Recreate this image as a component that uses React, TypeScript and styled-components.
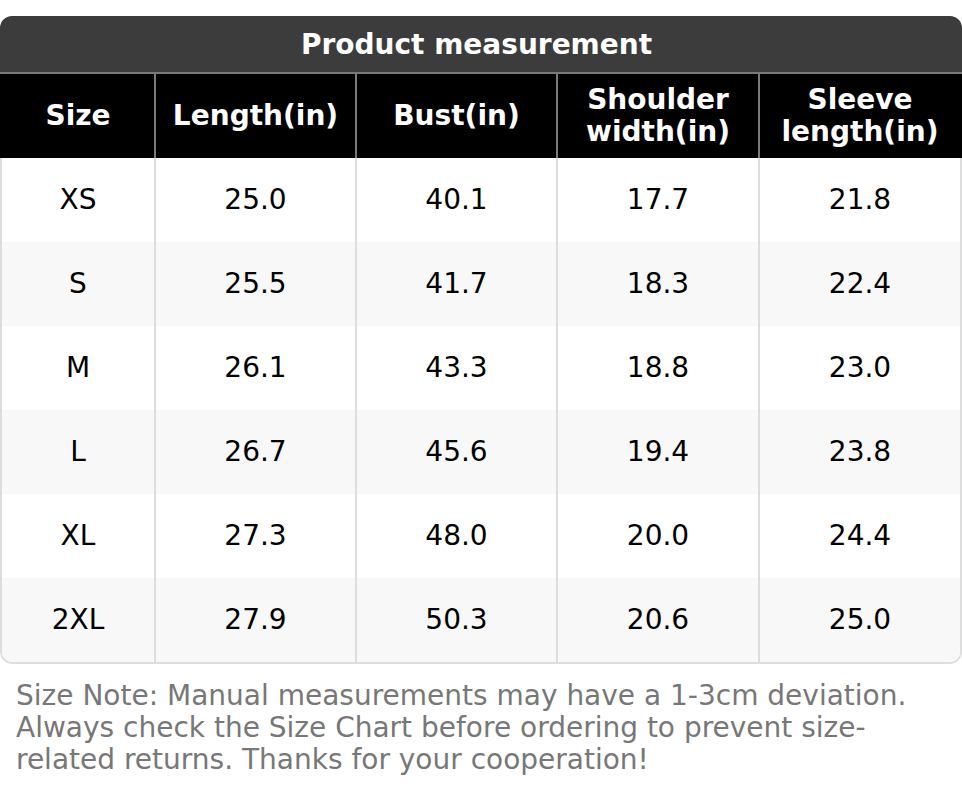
import React from "react";
import styled, { createGlobalStyle } from "styled-components";

const Global = createGlobalStyle`
  html, body { margin: 0; padding: 0; background: #ffffff; }
  body { font-family: "DejaVu Sans", Verdana, sans-serif; }
`;

const Page = styled.div`
  width: 962px;
  padding-top: 16px;
  font-family: "DejaVu Sans", Verdana, sans-serif;
`;

const Card = styled.div`
  border-radius: 12px;
  overflow: hidden;
`;

const Title = styled.div`
  height: 56px;
  background: #3c3c3c;
  border-bottom: 2px solid #7a7a7a;
  color: #ffffff;
  font-weight: bold;
  font-size: 28px;
  padding-right: 9px;
  display: flex;
  align-items: center;
  justify-content: center;
`;

const Grid = styled.div`
  display: grid;
  grid-template-columns: 154px 201px 201px 202px 1fr;
`;

const HeadRow = styled(Grid)`
  background: #000000;
  padding: 0 2px;
`;

const Body = styled(Grid)`
  border: 2px solid #dddddd;
  border-top: none;
  border-radius: 0 0 12px 12px;
  overflow: hidden;
`;

const HeadCell = styled.div<{ $last?: boolean }>`
  height: 84px;
  background: #000000;
  color: #ffffff;
  font-weight: bold;
  font-size: 28px;
  line-height: 32px;
  text-align: center;
  display: flex;
  align-items: center;
  justify-content: center;
  border-right: ${(p) => (p.$last ? "none" : "2px solid #7a7a7a")};
`;

const Cell = styled.div<{ $alt: boolean; $last?: boolean }>`
  height: 84px;
  background: ${(p) => (p.$alt ? "#f8f8f8" : "#ffffff")};
  color: #000000;
  font-size: 28px;
  line-height: 32px;
  display: flex;
  align-items: center;
  justify-content: center;
  border-right: ${(p) => (p.$last ? "none" : "2px solid #dddddd")};
`;

const Note = styled.p`
  margin: 16px 0 0;
  padding: 0 16px;
  color: #777777;
  font-size: 28px;
  line-height: 32px;
`;

const headers: React.ReactNode[] = [
  "Size",
  "Length(in)",
  "Bust(in)",
  <>Shoulder<br />width(in)</>,
  <>Sleeve<br />length(in)</>,
];

const rows = [
  ["XS", "25.0", "40.1", "17.7", "21.8"],
  ["S", "25.5", "41.7", "18.3", "22.4"],
  ["M", "26.1", "43.3", "18.8", "23.0"],
  ["L", "26.7", "45.6", "19.4", "23.8"],
  ["XL", "27.3", "48.0", "20.0", "24.4"],
  ["2XL", "27.9", "50.3", "20.6", "25.0"],
];

export default function App() {
  return (
    <Page>
      <Global />
      <Card>
        <Title>Product measurement</Title>
        <HeadRow>
          {headers.map((h, i) => (
            <HeadCell key={i} $last={i === headers.length - 1}>
              <span>{h}</span>
            </HeadCell>
          ))}
        </HeadRow>
        <Body>
          {rows.map((r, ri) =>
            r.map((v, ci) => (
              <Cell key={`${ri}-${ci}`} $alt={ri % 2 === 1} $last={ci === r.length - 1}>
                {v}
              </Cell>
            ))
          )}
        </Body>
      </Card>
      <Note>
        Size Note: Manual measurements may have a 1-3cm deviation. Always check the Size Chart before ordering to prevent size-related returns. Thanks for your cooperation!
      </Note>
    </Page>
  );
}
